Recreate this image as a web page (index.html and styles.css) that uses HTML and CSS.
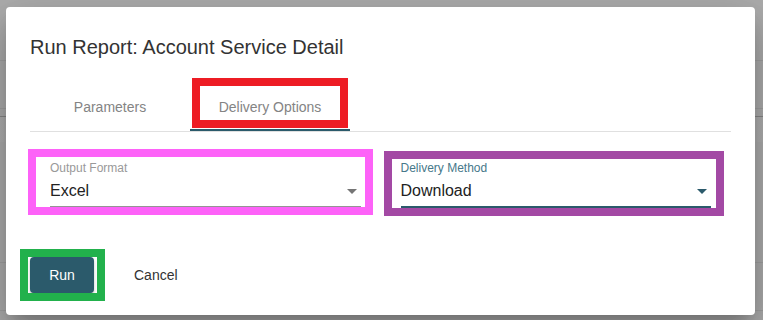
FILE: index.html
```html
<!DOCTYPE html>
<html lang="en">
<head>
<meta charset="utf-8">
<title>Run Report: Account Service Detail</title>
<link rel="stylesheet" href="styles.css">
</head>
<body>
<div class="page">
  <div class="dialog">
    <h2 class="title">Run Report: Account Service Detail</h2>
    <div class="tabs">
      <div class="tab">Parameters</div>
      <div class="tab active">Delivery Options</div>
    </div>
    <div class="form">
      <div class="col">
        <div class="field">
          <div class="label">Output Format</div>
          <div class="value">Excel<span class="arrow"></span></div>
        </div>
      </div>
      <div class="col">
        <div class="field focused">
          <div class="label">Delivery Method</div>
          <div class="value">Download<span class="arrow"></span></div>
        </div>
      </div>
    </div>
    <div class="actions">
      <button class="btn btn-run">Run</button>
      <button class="btn btn-cancel">Cancel</button>
    </div>
  </div>
  <div class="mark mark-red"></div>
  <div class="mark mark-pink"></div>
  <div class="mark mark-purple"></div>
  <div class="mark mark-green"></div>
</div>
</body>
</html>
```

FILE: styles.css
```css
* { box-sizing: border-box; }
html, body { margin: 0; height: 100%; }
body {
  font-family: "Liberation Sans", Arial, sans-serif;
  background-color: #adadad;
  background-image: linear-gradient(to bottom,
    transparent 60px, rgba(0,0,0,.07) 60px, rgba(0,0,0,.07) 61px, transparent 61px,
    transparent 108px, rgba(0,0,0,.07) 108px, rgba(0,0,0,.07) 109px, transparent 109px,
    transparent 116px, rgba(0,0,0,.22) 116px, rgba(0,0,0,.22) 117px, rgba(255,255,255,.03) 117px, rgba(255,255,255,.03) 142px, transparent 142px,
    transparent 262px, rgba(0,0,0,.07) 262px, rgba(0,0,0,.07) 263px, transparent 263px,
    transparent 310px, rgba(0,0,0,.07) 310px, rgba(0,0,0,.07) 311px, transparent 311px);
  overflow: hidden;
}
.page {
  position: relative;
  padding: 7px 8px 5px 6px;
  height: 320px;
}
.dialog {
  width: 749px;
  height: 308px;
  background: #fff;
  border-radius: 4px;
  padding: 24px;
  box-shadow: 0 11px 15px -7px rgba(0,0,0,.2), 0 24px 38px 3px rgba(0,0,0,.14), 0 9px 46px 8px rgba(0,0,0,.12);
}
.title {
  margin: 0 0 20px;
  font-size: 20px;
  line-height: 32px;
  font-weight: normal;
  color: #333;
}
.tabs {
  display: flex;
  border-bottom: 1px solid #e0e0e0;
}
.tab {
  width: 160px;
  height: 48px;
  display: flex;
  align-items: center;
  justify-content: center;
  font-size: 14px;
  color: #848484;
}
.tab.active {
  box-shadow: inset 0 -2px 0 #2b5a6b;
}
.form {
  display: grid;
  grid-template-columns: 1fr 1fr;
  align-items: start;
  margin-top: 29px;
}
.col { padding: 0 20px; }
.field {
  padding-bottom: 5px;
  border-bottom: 1px solid #949494;
}
.field.focused { border-bottom: 2px solid #2b5a6b; }
.label {
  font-size: 12px;
  line-height: 14px;
  color: #999;
  margin-bottom: 6px;
}
.focused .label { color: #46788a; }
.value {
  display: flex;
  align-items: center;
  justify-content: space-between;
  font-size: 16px;
  line-height: 20px;
  color: #222;
  padding-right: 4px;
}
.arrow {
  width: 0;
  height: 0;
  border-left: 5px solid transparent;
  border-right: 5px solid transparent;
  border-top: 5px solid #757575;
}
.focused .arrow { border-top-color: #2b5a6b; }
.actions {
  display: flex;
  align-items: center;
  margin-top: 49px;
}
.btn {
  font-family: "Liberation Sans", Arial, sans-serif;
  font-size: 14px;
  line-height: 36px;
  height: 36px;
  border: 0;
  border-radius: 4px;
  padding: 0 16px;
  background: transparent;
  color: #333;
}
.btn-run {
  width: 64px;
  background: #2b5a6b;
  color: #fff;
  box-shadow: 0 3px 1px -2px rgba(0,0,0,.2), 0 2px 2px 0 rgba(0,0,0,.14), 0 1px 5px 0 rgba(0,0,0,.12);
}
.btn-cancel { margin-left: 24px; }
.mark {
  position: absolute;
  border-style: solid;
  border-width: 8px;
}
.mark-red { left: 192px; top: 78px; width: 156px; height: 50px; border-color: #ed1c24; }
.mark-pink { left: 28px; top: 149px; width: 345px; height: 66px; border-color: #fd62f8; }
.mark-purple { left: 384px; top: 151px; width: 340px; height: 65px; border-color: #a349a4; }
.mark-green { left: 20px; top: 249px; width: 85px; height: 52px; border-color: #22b14c; }
```
